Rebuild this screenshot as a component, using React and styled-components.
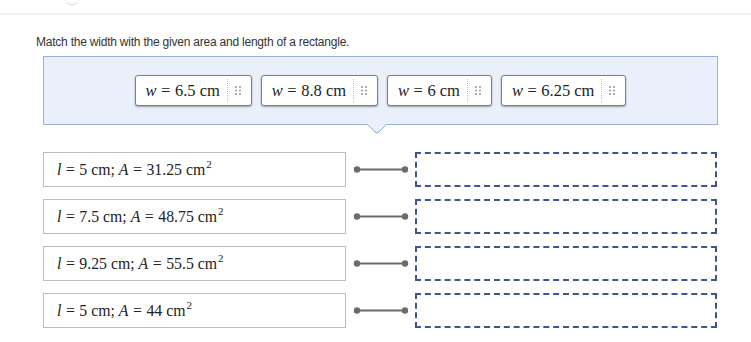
import React from "react";
import styled, { createGlobalStyle } from "styled-components";

const Global = createGlobalStyle`
  html, body { margin: 0; padding: 0; background: #ffffff; }
  body { font-family: "Liberation Sans", Arial, sans-serif; }
`;

const Page = styled.div`
  width: 751px;
  height: 342px;
  overflow: hidden;
  position: relative;
`;

const TopBar = styled.div`
  height: 13px;
  border-bottom: 2px solid #efefef;
  position: relative;
`;

const Crumb = styled.span`
  position: absolute;
  left: 65px;
  top: -6px;
  width: 14px;
  height: 10px;
  border-bottom: 1px solid #d8d8d8;
  border-radius: 0 0 6px 6px;
`;

const Content = styled.div`
  padding: 20px 0 0 36px;
`;

const Title = styled.div`
  font-size: 12px;
  line-height: 14px;
  color: #333;
  letter-spacing: -0.22px;
`;

const Bank = styled.div`
  position: relative;
  margin: 7px 0 0 7px;
  width: 673px;
  height: 67px;
  background: #e9f0fb;
  border: 1px solid #98b0da;
  display: flex;
  align-items: center;
  justify-content: center;
  gap: 9px;
  box-sizing: content-box;
`;

const Pointer = styled.div`
  position: absolute;
  left: 326px;
  bottom: -8px;
  width: 13px;
  height: 13px;
  background: #e9f0fb;
  border-right: 1px solid #98b0da;
  border-bottom: 1px solid #98b0da;
  border-radius: 0 0 4px 0;
  transform: rotate(45deg);
`;

const Chip = styled.div`
  height: 29px;
  display: flex;
  align-items: center;
  background: #fff;
  border: 1px solid #7d7d7d;
  border-radius: 3px;
  box-shadow: 0 1px 2px rgba(0, 0, 0, 0.35);
  padding-left: 10px;
`;

const Math = styled.span`
  font-family: "Liberation Serif", "Times New Roman", serif;
  font-size: ${(p) => p.$size || 16}px;
  color: #222;
  white-space: nowrap;
`;

const V = styled.i`
  font-style: italic;
`;

const Op = styled.span`
  margin: 0 4.5px;
`;

const Sup = styled.sup`
  font-size: 11px;
  vertical-align: 7px;
  line-height: 0;
  margin-left: 1px;
`;

const Sep = styled.span`
  margin-left: 7px;
  height: 23px;
  border-left: 1px dotted #bdbdbd;
`;

const Grip = styled.svg`
  margin: 0 10px 0 7px;
  display: block;
`;

const Rows = styled.div`
  margin: 27px 0 0 7px;
  display: flex;
  flex-direction: column;
  gap: 12px;
`;

const Row = styled.div`
  display: grid;
  grid-template-columns: 303px 69px 302px;
  height: 35px;
`;

const Prompt = styled.div`
  border: 1px solid #bdbdbd;
  box-sizing: border-box;
  display: flex;
  align-items: center;
  padding-left: 13px;
  background: #fff;
`;

const Link = styled.svg`
  display: block;
`;

const Drop = styled.div`
  box-sizing: border-box;
  border: 2px dashed #41548f;
  background: #fefefe;
`;

const GripIcon = () => (
  <Grip width="6" height="9" viewBox="0 0 6 9">
    {[0, 1].map((c) =>
      [0, 1, 2].map((r) => (
        <circle key={`${c}-${r}`} cx={1 + c * 4} cy={1 + r * 3.5} r="0.9" fill="#8a8a8a" />
      ))
    )}
  </Grip>
);

const chips = ["6.5", "8.8", "6", "6.25"];
const rows = [
  ["5", "31.25"],
  ["7.5", "48.75"],
  ["9.25", "55.5"],
  ["5", "44"],
];

export default function App() {
  return (
    <Page>
      <Global />
      <TopBar>
        <Crumb />
      </TopBar>
      <Content>
        <Title>Match the width with the given area and length of a rectangle.</Title>
        <Bank>
          {chips.map((w) => (
            <Chip key={w}>
              <Math $size={16.5}>
                <V>w</V>
                <Op>=</Op>
                {w} cm
              </Math>
              <Sep />
              <GripIcon />
            </Chip>
          ))}
          <Pointer />
        </Bank>
        <Rows>
          {rows.map(([l, a], i) => (
            <Row key={i}>
              <Prompt>
                <Math $size={15.8}>
                  <V>l</V>
                  <Op>=</Op>
                  {l} cm; <V>A</V>
                  <Op>=</Op>
                  {a} cm<Sup>2</Sup>
                </Math>
              </Prompt>
              <Link width="69" height="35" viewBox="0 0 69 35">
                <line x1="11" y1="17.5" x2="59" y2="17.5" stroke="#6b6b6b" strokeWidth="2" />
                <circle cx="11" cy="17.5" r="3.2" fill="#6b6b6b" />
                <circle cx="59" cy="17.5" r="3.2" fill="#6b6b6b" />
              </Link>
              <Drop />
            </Row>
          ))}
        </Rows>
      </Content>
    </Page>
  );
}
